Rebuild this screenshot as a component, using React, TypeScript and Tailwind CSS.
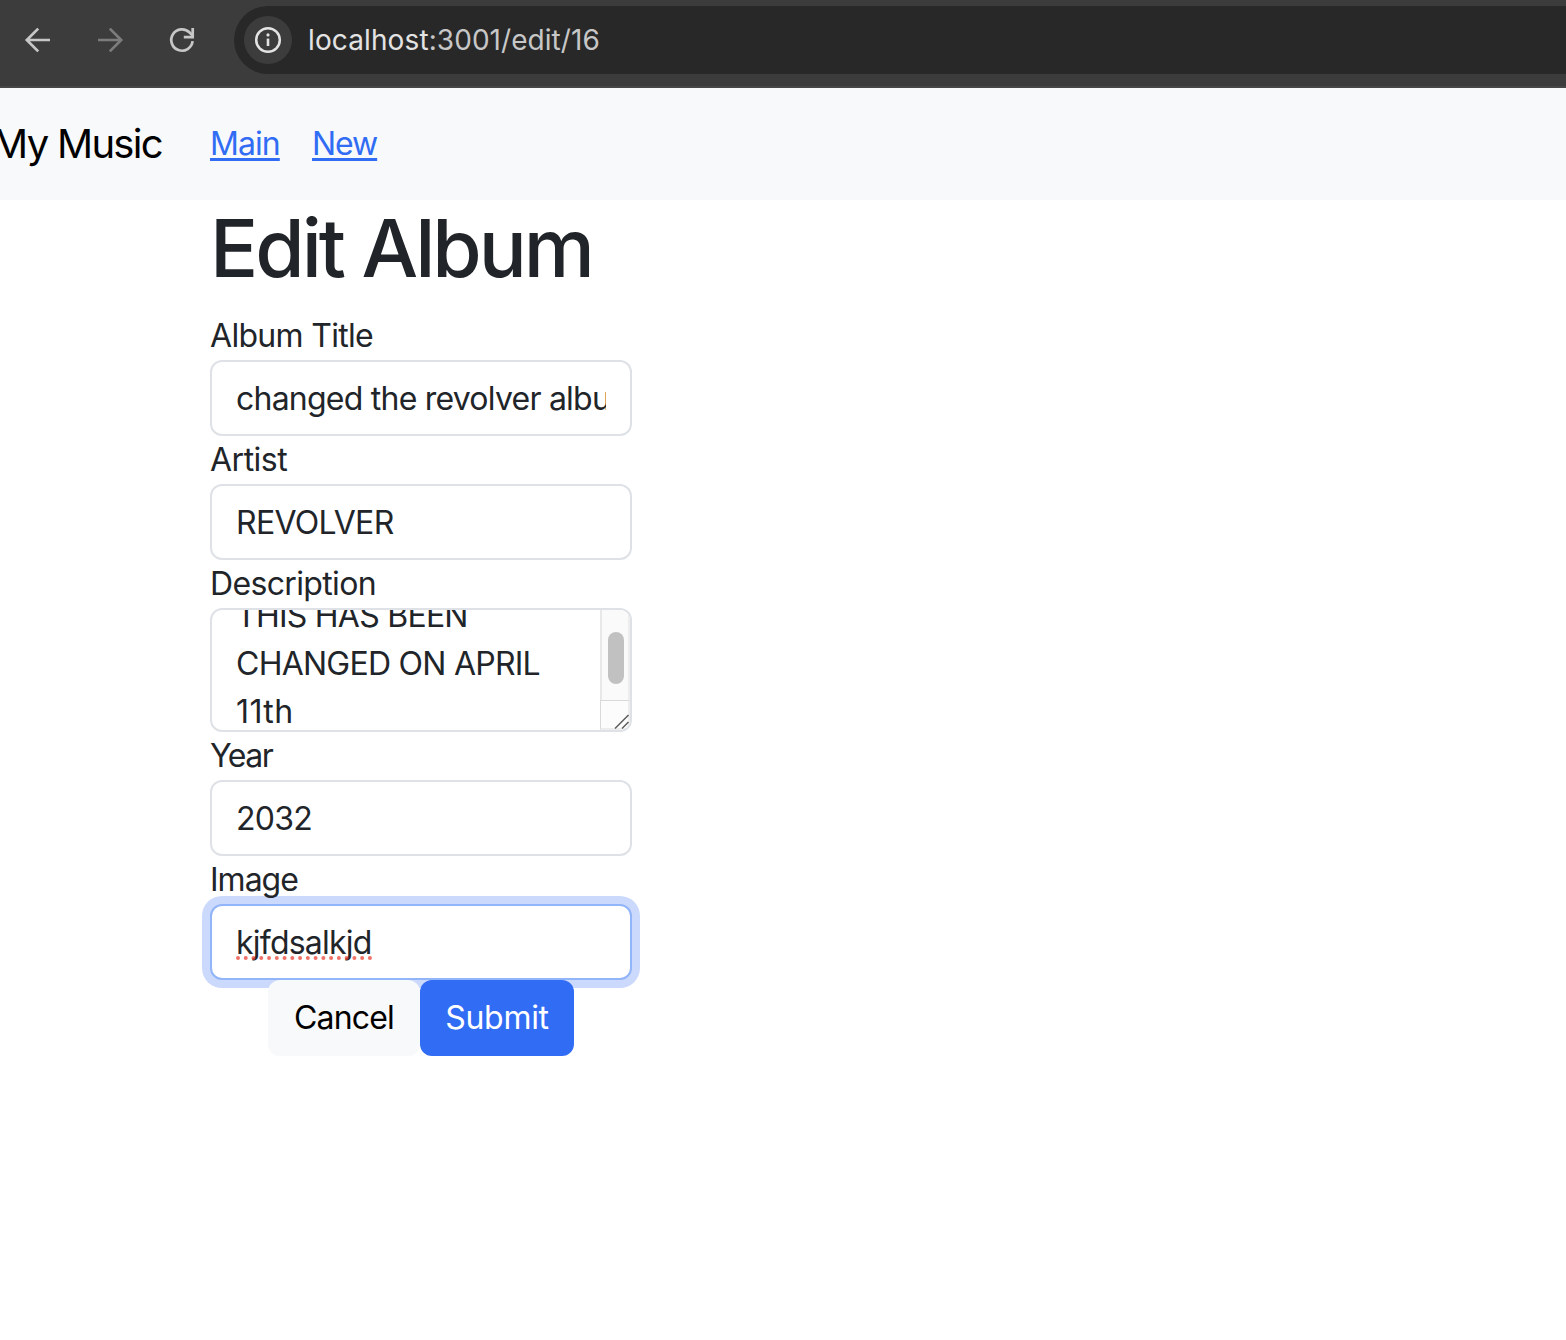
import type { ReactNode } from 'react';

function BackIcon() {
  return (
    <svg className="h-7 w-7" viewBox="0 0 28 28" fill="none" stroke="#c7c7c7" strokeWidth="2.7">
      <path d="M26 14H4M14.2 2.6 2.8 14l11.4 11.4" />
    </svg>
  );
}

function ForwardIcon() {
  return (
    <svg className="h-7 w-7" viewBox="0 0 28 28" fill="none" stroke="#7c7c7c" strokeWidth="2.7">
      <path d="M2 14h22M13.8 2.6 25.2 14 13.8 25.4" />
    </svg>
  );
}

function ReloadIcon() {
  return (
    <svg className="h-7 w-7" viewBox="0 0 28 28" fill="none" stroke="#c7c7c7" strokeWidth="2.7">
      <path d="M24.6 15.2A10.7 10.7 0 1 1 21.6 6.5L24.6 9.6" />
      <path d="M24.7 2v9.2H15.8" />
    </svg>
  );
}

function InfoIcon() {
  return (
    <svg className="h-7 w-7" viewBox="0 0 28 28" fill="none">
      <circle cx="14" cy="14" r="11.8" stroke="#e3e3e3" strokeWidth="2.5" />
      <path d="M14 12.6v7.4" stroke="#e3e3e3" strokeWidth="2.6" />
      <circle cx="14" cy="8.9" r="1.6" fill="#e3e3e3" />
    </svg>
  );
}

function BrowserBar() {
  return (
    <div className="flex h-[88px] border-b-2 border-[#474747] bg-[#3c3c3c] pt-1.5">
      <div className="flex h-[68px] shrink-0 items-center gap-11 pl-6">
        <BackIcon />
        <ForwardIcon />
        <ReloadIcon />
      </div>
      <div className="ml-[38px] flex h-[68px] flex-1 items-center rounded-l-full bg-[#282828] pl-2.5 text-[28px]">
        <div className="flex size-12 items-center justify-center rounded-full bg-[#3c3c3c]">
          <InfoIcon />
        </div>
        <div className="ml-4 tracking-[0.05px] whitespace-nowrap text-[#c7c7c7]">
          <span className="tracking-[0.12px] text-[#e3e3e3]">localhost</span>:3001/edit/16
        </div>
      </div>
    </div>
  );
}

function Field({ label, labelClass, children }: { label: string; labelClass: string; children: ReactNode }) {
  return (
    <label className="block">
      <span className={`block h-12 ${labelClass}`}>{label}</span>
      {children}
    </label>
  );
}

const inputClass =
  'block h-[76px] w-full rounded-xl border-2 border-[#dee2e6] bg-white px-6 outline-none';

function DescriptionBox() {
  return (
    <div className="relative h-[124px] overflow-hidden rounded-xl border-2 border-[#dee2e6] bg-white">
      <div className="-mt-[18px] pl-6 tracking-[-0.75px]">
        <div>THIS HAS BEEN</div>
        <div>CHANGED ON APRIL</div>
        <div className="tracking-[0.4px]">11th</div>
      </div>
      <div className="absolute top-0 right-0 flex h-full w-[30px] flex-col">
        <div className="h-[90px] border-r-2 border-l-2 border-l-[#e8e8e8] border-r-[#ededed] bg-[#fafafa] pt-[22px] pl-1.5">
          <div className="h-[52px] w-4 rounded-full bg-[#c1c1c1]" />
        </div>
        <div className="relative flex-1 border-t border-r-2 border-b-2 border-l border-t-[#d9d9d9] border-r-[#ededed] border-b-[#ededed] border-l-[#d9d9d9] bg-[#fcfcfc]">
          <svg className="absolute -right-0.5 -bottom-0.5 h-4 w-4" viewBox="0 0 16 16" stroke="#5c5c5c" strokeWidth="1.5">
            <path d="M1 14.5 14.5 1M8 14.5 14.5 8" />
          </svg>
        </div>
      </div>
    </div>
  );
}

const squiggleDots = Array.from({ length: 18 }, (_, i) => 2 + i * 7.76);

export default function App() {
  return (
    <div className="min-h-[1340px] overflow-hidden bg-white font-['Inter',sans-serif] text-[32px] leading-[48px] text-[#212529]">
      <BrowserBar />
      <nav className="flex h-28 items-center bg-[#f8f9fa]">
        <div className="-ml-2 w-[218px] text-[40px] leading-[60px] tracking-[-1.7px] whitespace-nowrap text-black">My Music</div>
        <div className="flex gap-8 text-[#316cf4] underline decoration-[3px] underline-offset-[3px]">
          <a href="#main" className="w-[70px] tracking-[-1px]">Main</a>
          <a href="#new" className="tracking-[-1.1px]">New</a>
        </div>
      </nav>
      <main className="ml-[210px] w-[422px]">
        <h1 className="mb-4 text-[80px] leading-[96px] font-medium tracking-[-3px] whitespace-nowrap">Edit Album</h1>
        <form>
          <Field label="Album Title" labelClass="tracking-[-0.7px]">
            <input className={`${inputClass} tracking-[-0.77px]`} defaultValue="changed the revolver album" />
          </Field>
          <Field label="Artist" labelClass="tracking-[-0.5px]">
            <input className={`${inputClass} tracking-[-0.7px]`} defaultValue="REVOLVER" />
          </Field>
          <Field label="Description" labelClass="tracking-[-0.65px]">
            <DescriptionBox />
          </Field>
          <Field label="Year" labelClass="tracking-[-1.5px]">
            <input className={`${inputClass} tracking-[-0.7px]`} defaultValue="2032" />
          </Field>
          <Field label="Image" labelClass="relative z-10 tracking-[-1px]">
            <div className="relative">
              <input
                className="block h-[76px] w-full rounded-xl border-2 border-[#92b4f8] bg-white px-6 tracking-[-0.78px] shadow-[0_0_0_8px_#cbd9fc] outline-none"
                defaultValue="kjfdsalkjd"
              />
              <svg className="absolute top-[52px] left-[26px] h-1 w-[138px]" viewBox="0 0 138 4" fill="#ea4335" fillOpacity="0.75">
                {squiggleDots.map((x) => (
                  <circle key={x} cx={x} cy="2" r="2" />
                ))}
              </svg>
            </div>
          </Field>
          <div className="relative flex justify-center">
            <button type="button" className="h-[76px] w-[152px] rounded-xl bg-[#f8f9fa] tracking-[-0.8px] text-black">Cancel</button>
            <button type="button" className="h-[76px] w-[154px] rounded-xl bg-[#316cf4] tracking-[-0.3px] text-white">Submit</button>
          </div>
        </form>
      </main>
    </div>
  );
}
